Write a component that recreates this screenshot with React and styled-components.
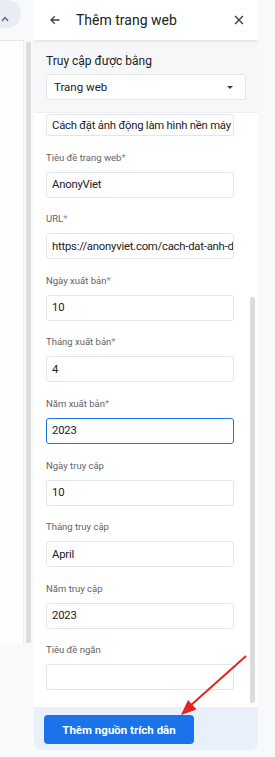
import React from "react";
import styled, { createGlobalStyle } from "styled-components";

const GlobalStyle = createGlobalStyle`
  html, body {
    margin: 0;
    padding: 0;
    background: #f8f9fb;
    font-family: Roboto, "Noto Sans", "Liberation Sans", sans-serif;
  }
  * { box-sizing: border-box; }
`;

const Page = styled.div`
  position: relative;
  display: flex;
  width: 275px;
  height: 757px;
  overflow: hidden;
`;

const LeftRail = styled.div`
  width: 34px;
  display: flex;
  flex-direction: column;
`;

const Pill = styled.div`
  width: 21px;
  height: 28px;
  background: #e8edf5;
  border-radius: 0 14px 14px 0;
  color: #5f6368;
  padding: 7px 0 0 1px;
`;

const RailBody = styled.div`
  margin-top: 12px;
  display: flex;
  height: 605px;
`;

const SideCard = styled.div`
  width: 24px;
  background: #fdfdfe;
  border-top: 1px solid #e4e6ea;
  border-right: 1px solid #eceef1;
`;

const RailThumb = styled.div`
  width: 5px;
  margin: 2px 0 0 2px;
  height: 601px;
  background: #dadce0;
  border-radius: 2px;
`;

const Panel = styled.div`
  width: 224px;
  height: 750px;
  display: flex;
  flex-direction: column;
  border-radius: 0 0 8px 8px;
  overflow: hidden;
`;

const Header = styled.div`
  height: 40px;
  flex-shrink: 0;
  background: #fff;
  display: flex;
  align-items: center;
  padding: 0 14px 0 16px;
  box-shadow: 0 1px 3px rgba(60, 64, 67, 0.15);
  position: relative;
  z-index: 1;
`;

const Title = styled.div`
  flex: 1;
  margin-left: 16px;
  font-size: 14px;
  color: #202124;
`;

const IconButton = styled.span`
  display: flex;
  width: 10px;
  height: 10px;
  color: #3c4043;
`;

const AccessSection = styled.div`
  flex-shrink: 0;
  background: #f6f7f9;
  padding: 13px 12px 12px;
`;

const AccessLabel = styled.div`
  font-size: 12px;
  line-height: 16px;
  color: #202124;
  margin-bottom: 5px;
`;

const SelectBox = styled.div`
  height: 26px;
  background: #fff;
  border: 1px solid #e3e5e8;
  border-radius: 3px;
  display: flex;
  align-items: center;
  justify-content: space-between;
  padding: 0 12px 0 7px;
  font-size: 11.5px;
  color: #202124;
`;

const Caret = styled.span`
  width: 0;
  height: 0;
  border-left: 3px solid transparent;
  border-right: 3px solid transparent;
  border-top: 3px solid #3c4043;
`;

const ScrollArea = styled.div`
  flex: 1;
  position: relative;
  background: #fff;
  border-top: 1px solid #eceef1;
  padding: 0 24px 0 12px;
  overflow: hidden;
`;

const Field = styled.div`
  padding-top: 14.6px;
`;

const Label = styled.div`
  font-size: 9.5px;
  line-height: 14px;
  color: #5f6368;
  margin-bottom: 7px;
  white-space: nowrap;
`;

const Star = styled.span`
  color: #6b8fd6;
`;

const Input = styled.div`
  height: ${(p) => (p.$clipped ? "22px" : "26px")};
  background: #fff;
  border: ${(p) => (p.$focused ? "1.5px solid #1a73e8" : "1px solid #e3e5e8")};
  border-radius: 3px;
  display: flex;
  align-items: center;
  padding: 0 5px;
  font-size: 11.3px;
  letter-spacing: -0.22px;
  color: #202124;
  white-space: nowrap;
  overflow: hidden;
  margin-top: ${(p) => (p.$clipped ? "1px" : "0")};
`;

const PanelThumb = styled.div`
  position: absolute;
  right: 3px;
  top: 184px;
  width: 5px;
  height: 406px;
  border-radius: 3px;
  background: #dadce0;
`;

const Footer = styled.div`
  height: 43px;
  flex-shrink: 0;
  background: #e9f0fb;
  padding: 8px 10px;
`;

const PrimaryButton = styled.button`
  width: 150px;
  height: 29px;
  border: none;
  border-radius: 4px;
  background: #1a73e8;
  color: #fff;
  font-family: inherit;
  font-size: 11.5px;
  font-weight: 700;
`;

const Annotation = styled.svg`
  position: absolute;
  left: 0;
  top: 0;
  pointer-events: none;
`;

const fields = [
  { label: "Tiêu đề trang web", required: true, value: "AnonyViet" },
  { label: "URL", required: true, value: "https://anonyviet.com/cach-dat-anh-d" },
  { label: "Ngày xuất bản", required: true, value: "10" },
  { label: "Tháng xuất bản", required: true, value: "4" },
  { label: "Năm xuất bản", required: true, value: "2023", focused: true },
  { label: "Ngày truy cập", value: "10" },
  { label: "Tháng truy cập", value: "April" },
  { label: "Năm truy cập", value: "2023" },
  { label: "Tiêu đề ngắn", value: "" },
];

const App = () => {
  return (
    <Page>
      <GlobalStyle />
      <LeftRail>
        <Pill>
          <svg width="8" height="6" viewBox="0 0 8 6" fill="none" stroke="currentColor" strokeWidth="1.3">
            <path d="M1 5l3-3.4L7 5" />
          </svg>
        </Pill>
        <RailBody>
          <SideCard />
          <RailThumb />
        </RailBody>
      </LeftRail>
      <Panel>
        <Header>
          <IconButton>
            <svg width="10" height="10" viewBox="0 0 10 10" fill="none" stroke="currentColor" strokeWidth="1.3">
              <path d="M9.5 5H1M4.8 1.2L1 5l3.8 3.8" />
            </svg>
          </IconButton>
          <Title>Thêm trang web</Title>
          <IconButton>
            <svg width="10" height="10" viewBox="0 0 10 10" fill="none" stroke="currentColor" strokeWidth="1.4">
              <path d="M1 1l8 8M9 1L1 9" />
            </svg>
          </IconButton>
        </Header>
        <AccessSection>
          <AccessLabel>Truy cập được bằng</AccessLabel>
          <SelectBox>
            Trang web
            <Caret />
          </SelectBox>
        </AccessSection>
        <ScrollArea>
          <Input $clipped>Cách đặt ảnh động làm hình nền máy</Input>
          {fields.map((f) => (
            <Field key={f.label}>
              <Label>
                {f.label}
                {f.required && <Star>*</Star>}
              </Label>
              <Input $focused={f.focused}>{f.value}</Input>
            </Field>
          ))}
          <PanelThumb />
        </ScrollArea>
        <Footer>
          <PrimaryButton>Thêm nguồn trích dẫn</PrimaryButton>
        </Footer>
      </Panel>
      <Annotation width="275" height="757" viewBox="0 0 275 757">
        <line x1="246" y1="656" x2="190" y2="706" stroke="#e3241f" strokeWidth="2" />
        <polygon points="181,715 196.5,709.5 188,700" fill="#e3241f" />
      </Annotation>
    </Page>
  );
};

export default App;
